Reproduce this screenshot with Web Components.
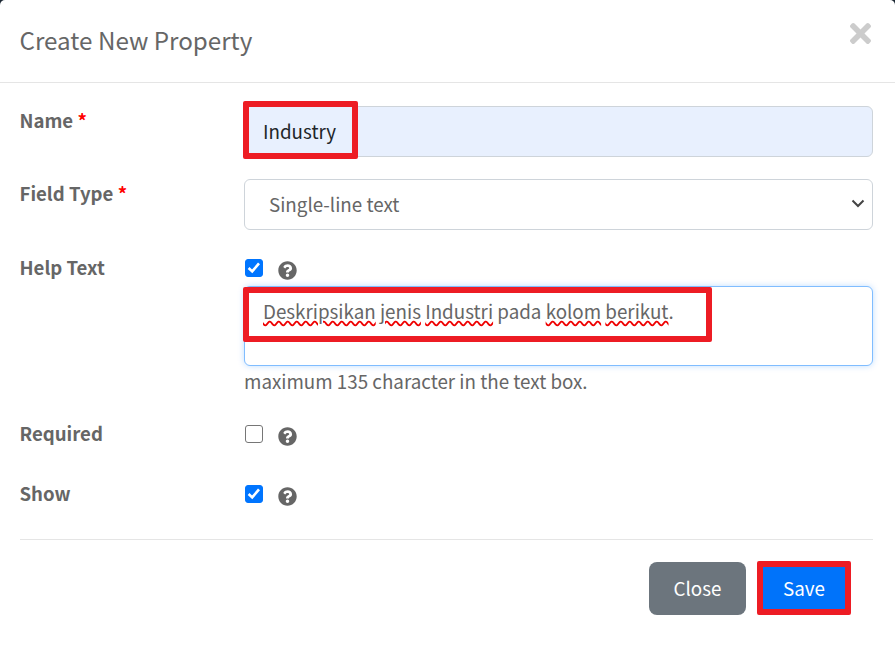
<!DOCTYPE html>
<html>
<head>
<meta charset="utf-8">
<title>Create New Property</title>
<style>
    html, body { margin: 0; height: 100%; }
    body {
        background: #fff;
        font-family: "Noto Sans CJK SC", "Noto Sans", sans-serif;
        color: #666;
    }
</style>
</head>
<body>

<property-dialog>
    <span slot="title">Create New Property</span>

    <field-row label="Name" required gap="23" nudge="-1">
        <text-field value="Industry" mark></text-field>
    </field-row>
    <field-row label="Field Type" required gap="22" nudge="-1">
        <select-field value="Single-line text"></select-field>
    </field-row>
    <field-row label="Help Text" gap="22">
        <check-line checked></check-line>
        <note-area hint="maximum 135 character in the text box.">
            <u>Deskripsikan</u> <u>jenis</u> <u>Industri</u> pada <u>kolom</u> <u>berikut</u>.
        </note-area>
    </field-row>
    <field-row label="Required" gap="22">
        <check-line></check-line>
    </field-row>
    <field-row label="Show" gap="26">
        <check-line checked></check-line>
    </field-row>

    <action-button slot="footer" kind="secondary">Close</action-button>
    <action-button slot="footer" kind="primary" mark>Save</action-button>
</property-dialog>

<script>
const QUESTION_PATH = 'M504 256c0 136.997-111.043 248-248 248S8 392.997 8 256C8 119.083 119.043 8 256 8s248 111.083 248 248zM262.655 90c-54.497 0-89.255 22.957-116.549 63.758-3.536 5.286-2.353 12.415 2.715 16.258l34.699 26.31c5.205 3.947 12.621 3.008 16.665-2.122 17.864-22.658 30.113-35.797 57.303-35.797 20.429 0 45.698 13.148 45.698 32.958 0 14.976-12.363 22.667-32.534 33.976C247.128 238.528 216 254.941 216 296v4c0 6.627 5.373 12 12 12h56c6.627 0 12-5.373 12-12v-1.333c0-28.462 83.186-29.647 83.186-106.667 0-58.002-60.165-102-116.531-102zM256 338c-25.365 0-46 20.635-46 46 0 25.364 20.635 46 46 46s46-20.636 46-46c0-25.365-20.635-46-46-46z';
const TIMES_PATH = 'M242.72 256l100.07-100.07c12.28-12.28 12.28-32.19 0-44.48l-22.24-22.24c-12.28-12.28-32.19-12.28-44.48 0L176 189.28 75.93 89.21c-12.28-12.28-32.19-12.28-44.48 0L9.21 111.45c-12.28 12.28-12.28 32.19 0 44.48L109.28 256 9.21 356.07c-12.28 12.28-12.28 32.19 0 44.48l22.24 22.24c12.28 12.28 32.2 12.28 44.48 0L176 322.72l100.07 100.07c12.28 12.28 32.2 12.28 44.48 0l22.24-22.24c12.28-12.28 12.28-32.19 0-44.48L242.72 256z';

class PropertyDialog extends HTMLElement {
    connectedCallback() {
        this.attachShadow({ mode: 'open' });
        this.shadowRoot.innerHTML = `
            <style>
                :host { display: block; background: #1c2733; height: 652px; }
                .modal { background: #fff; height: 100%; border-radius: 5px 5px 0 0; box-sizing: border-box; }
                header {
                    display: flex; justify-content: space-between; align-items: flex-start;
                    height: 83px; box-sizing: border-box;
                    border-bottom: 1px solid #e5e5e5;
                    padding: 22px 24px 0 19.5px;
                }
                h1 { margin: 0; font-size: 24.2px; line-height: 36px; font-weight: 400; color: #666; }
                svg { width: 21px; height: 21px; fill: #ccc; display: block; margin-top: 1px; }
                main { padding: 0 22px 0 19.5px; }
                footer {
                    margin: 27px 22px 0 20px; border-top: 1px solid #e5e5e5; padding: 22px 22px 0 0;
                    display: flex; justify-content: flex-end; gap: 11px;
                }
            </style>
            <div class="modal">
                <header>
                    <h1><slot name="title"></slot></h1>
                    <svg viewBox="0 80 352 352"><path d="${TIMES_PATH}"/></svg>
                </header>
                <main><slot></slot></main>
                <footer><slot name="footer"></slot></footer>
            </div>
        `;
    }
}

class FieldRow extends HTMLElement {
    connectedCallback() {
        const star = this.hasAttribute('required') ? '<span class="req">*</span>' : '';
        this.attachShadow({ mode: 'open' });
        this.shadowRoot.innerHTML = `
            <style>
                :host { display: grid; grid-template-columns: 224.5px 629px; margin-top: ${this.getAttribute('gap') || 0}px; }
                label { font-size: 18.6px; line-height: 30px; font-weight: 700; color: #666; margin-top: ${this.getAttribute('nudge') || 0}px; }
                .req { color: #f00; }
            </style>
            <label>${this.getAttribute('label')} ${star}</label>
            <div><slot></slot></div>
        `;
    }
}

class RedMark extends HTMLElement {
    connectedCallback() {
        this.attachShadow({ mode: 'open' });
        this.shadowRoot.innerHTML = `
            <style>
                :host {
                    position: absolute; box-sizing: border-box;
                    border: 6px solid #ed1c24; border-radius: 2px; pointer-events: none;
                }
            </style>
        `;
    }
}

class TextField extends HTMLElement {
    connectedCallback() {
        this.attachShadow({ mode: 'open' });
        this.shadowRoot.innerHTML = `
            <style>
                :host { display: block; position: relative; }
                .box {
                    height: 51px; box-sizing: border-box; padding: 0 18px 2px; display: flex; align-items: center;
                    background: #e8f0fe; border: 1px solid #ced4da; border-radius: 6px;
                    font-size: 18.8px; color: #212529;
                }
                red-mark { left: -1px; top: -5px; width: 115px; height: 58px; }
            </style>
            <div class="box">${this.getAttribute('value')}</div>
            <red-mark></red-mark>
        `;
    }
}

class SelectField extends HTMLElement {
    connectedCallback() {
        this.attachShadow({ mode: 'open' });
        this.shadowRoot.innerHTML = `
            <style>
                :host { display: block; }
                .box {
                    height: 51px; box-sizing: border-box; padding: 0 7px 2px 24px;
                    display: flex; align-items: center; justify-content: space-between;
                    background: #fff; border: 1px solid #ced4da; border-radius: 6px;
                    font-size: 18.8px; color: #666;
                }
                svg { width: 14px; height: 9px; fill: none; stroke: #444; stroke-width: 2; }
            </style>
            <div class="box">
                <span>${this.getAttribute('value')}</span>
                <svg viewBox="0 0 14 9"><path d="M1.5 1.5 7 7l5.5-5.5"/></svg>
            </div>
        `;
    }
}

class CheckLine extends HTMLElement {
    connectedCallback() {
        const on = this.hasAttribute('checked');
        this.attachShadow({ mode: 'open' });
        this.shadowRoot.innerHTML = `
            <style>
                :host { display: flex; align-items: flex-start; height: 34px; padding: 7px 0 0 1px; box-sizing: border-box; gap: 15px; }
                .box {
                    width: 18px; height: 18px; box-sizing: border-box; border-radius: 3px;
                    border: 1px solid #767676; background: #fff; flex: none;
                }
                .box.on { background: #0075ff; border-color: #0075ff; }
                .box svg { display: block; width: 16px; height: 16px; fill: none; stroke: #fff; stroke-width: 2.6; }
                .help { width: 19px; height: 19px; fill: #666; flex: none; margin-top: 2px; }
            </style>
            <div class="box ${on ? 'on' : ''}">
                ${on ? '<svg viewBox="0 0 16 16"><path d="M2.6 8 6.2 11.4 13 3.4"/></svg>' : ''}
            </div>
            <svg class="help" viewBox="0 0 512 512"><path d="${QUESTION_PATH}"/></svg>
        `;
    }
}

class NoteArea extends HTMLElement {
    connectedCallback() {
        this.attachShadow({ mode: 'open' });
        this.shadowRoot.innerHTML = `
            <style>
                :host { display: block; position: relative; }
                .box {
                    height: 80px; box-sizing: border-box; padding: 9px 18px;
                    background: #fff; border: 1px solid #80bdff; border-radius: 6px;
                    box-shadow: 0 0 6px rgba(0,123,255,.25);
                    font-size: 18.8px; line-height: 30px; color: #666;
                }
                ::slotted(u) { text-decoration: underline wavy #e00; }
                p { margin: 0; font-size: 18.8px; line-height: 30px; color: #666; }
                red-mark { left: -1px; top: 1px; width: 469px; height: 55px; }
            </style>
            <div class="box"><slot></slot></div>
            <p>${this.getAttribute('hint')}</p>
            <red-mark></red-mark>
        `;
    }
}

class ActionButton extends HTMLElement {
    connectedCallback() {
        const primary = this.getAttribute('kind') === 'primary';
        this.attachShadow({ mode: 'open' });
        this.shadowRoot.innerHTML = `
            <style>
                :host { display: block; position: relative; }
                button {
                    display: block; border: 0; padding: 0 0 2px; margin: 0; color: #fff; font: inherit; font-size: 18.8px;
                    height: 53px; width: ${primary ? 94 : 97}px; border-radius: 8px;
                    background: ${primary ? '#0073fa' : '#6c757d'};
                }
                red-mark { left: 0; top: -1px; width: 94px; height: 54px; }
            </style>
            <button><slot></slot></button>
            ${this.hasAttribute('mark') ? '<red-mark></red-mark>' : ''}
        `;
    }
}

customElements.define('red-mark', RedMark);
customElements.define('property-dialog', PropertyDialog);
customElements.define('field-row', FieldRow);
customElements.define('text-field', TextField);
customElements.define('select-field', SelectField);
customElements.define('check-line', CheckLine);
customElements.define('note-area', NoteArea);
customElements.define('action-button', ActionButton);
</script>
</body>
</html>
